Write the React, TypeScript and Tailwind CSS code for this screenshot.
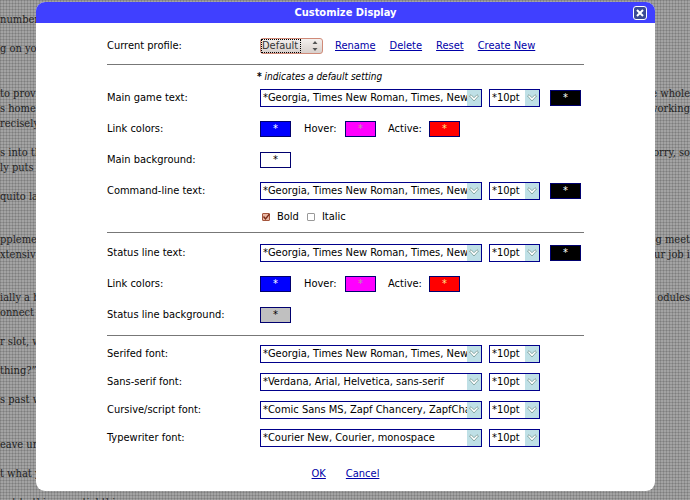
import { useId } from "react";

const GEORGIA = "*Georgia, Times New Roman, Times, New York, serif";

type StoryLine = { left?: string; right?: string };

const story: { gap: string; lines: StoryLine[] }[] = [
  { gap: "mt-3", lines: [{ left: "number" }] },
  { gap: "mt-3.5", lines: [{ left: "g on you" }] },
  {
    gap: "mt-[30px]",
    lines: [
      { left: "to provi", right: "e whole" },
      { left: "s home", right: "working" },
      { left: "recisely" },
    ],
  },
  { gap: "mt-3.5", lines: [{ left: "s into th", right: "orry, so" }, { left: "ly puts" }] },
  { gap: "mt-3.5", lines: [{ left: "quito la" }] },
  {
    gap: "mt-7",
    lines: [
      { left: "pplemen", right: "g meet" },
      { left: "xtensiv", right: "ur job i" },
    ],
  },
  { gap: "mt-7", lines: [{ left: "ially a b", right: "odules" }, { left: "onnect" }] },
  { gap: "mt-3.5", lines: [{ left: "r slot, w" }] },
  { gap: "mt-3.5", lines: [{ left: "thing?”" }] },
  { gap: "mt-3.5", lines: [{ left: "s past w" }] },
  { gap: "mt-[30px]", lines: [{ left: "eave un" }] },
  { gap: "mt-3.5", lines: [{ left: "t what y" }] },
  { gap: "mt-3.5", lines: [{ left: "got to this essential this" }] },
];

function StoryBackdrop() {
  return (
    <div
      aria-hidden="true"
      className="absolute inset-0 overflow-hidden bg-[#a3a3a3] bg-[linear-gradient(to_right,#00000020_1px,transparent_1px),linear-gradient(to_bottom,#00000020_1px,transparent_1px)] bg-[size:3px_3px] font-['DejaVu_Serif_Condensed','DejaVu_Serif',serif] text-[11px] leading-[15px] text-[#222]"
    >
      {story.map((p, i) => (
        <div key={i} className={p.gap}>
          {p.lines.map((line, j) => (
            <div key={j} className="flex h-[15px] justify-between whitespace-nowrap">
              <span>{line.left}</span>
              <span>{line.right}</span>
            </div>
          ))}
        </div>
      ))}
    </div>
  );
}

function Combo({ label, value, wide }: { label: string; value: string; wide?: boolean }) {
  return (
    <span
      className={`relative flex h-[18px] shrink-0 items-stretch border border-[#00008b] bg-white ${wide ? "w-[222px]" : "w-[51px]"}`}
    >
      <select
        aria-label={label}
        className={`h-full w-full appearance-none overflow-hidden bg-transparent pl-0.5 text-[11px] outline-none ${wide ? "pr-3.5" : "pr-3"}`}
      >
        <option>{value}</option>
      </select>
      <span className="pointer-events-none absolute inset-y-0 right-0 flex w-3.5 items-center justify-center bg-[#bfe0e6]">
        <svg viewBox="0 0 10 8" className="h-2 w-2.5" aria-hidden="true">
          <path d="M.5 2 2 .7 5 3.7 8 .7 9.5 2 5 7z" fill="#fff" stroke="#7d9f9a" strokeWidth=".9" />
        </svg>
      </span>
    </span>
  );
}

function Swatch({ label, className }: { label: string; className: string }) {
  return (
    <button
      type="button"
      aria-label={label}
      className={`h-4 w-[31px] shrink-0 border border-[#00006e] text-[11px] leading-[14px] ${className}`}
    >
      *
    </button>
  );
}

function Row({ label, children }: { label: string; children: React.ReactNode }) {
  return (
    <div className="flex h-[18px] items-center">
      <span className="w-[153px] shrink-0">{label}</span>
      {children}
    </div>
  );
}

function FontRow({ label, value = GEORGIA, swatch }: { label: string; value?: string; swatch?: boolean }) {
  return (
    <Row label={label}>
      <Combo wide label={label} value={value} />
      <span className="w-[7px]" />
      <Combo label={`${label} size`} value="*10pt" />
      {swatch && (
        <span className="ml-2.5 flex">
          <Swatch label={`${label} color`} className="bg-black text-white" />
        </span>
      )}
    </Row>
  );
}

function LinkColors() {
  return (
    <Row label="Link colors:">
      <Swatch label="Link color" className="bg-[#0000ff] text-white" />
      <span className="ml-[13px] w-[41px]">Hover:</span>
      <Swatch label="Hover color" className="bg-[#ff00ff] text-[#b0a0a0]" />
      <span className="ml-3 w-[41px]">Active:</span>
      <Swatch label="Active color" className="bg-[#ff0000] text-[#ffe08a]" />
    </Row>
  );
}

function TextLink({ children }: { children: string }) {
  return (
    <a href="#" className="text-[#0000a8] underline">
      {children}
    </a>
  );
}

function TickBox({ label, checked }: { label: string; checked?: boolean }) {
  const id = useId();
  return (
    <span className="flex items-center">
      <span className="relative flex">
        <input
          id={id}
          type="checkbox"
          defaultChecked={checked}
          className="peer size-2 appearance-none rounded-[1px] border border-[#999] bg-white checked:border-[#a4553c] checked:bg-[#e9b8a4]"
        />
        <svg viewBox="0 0 8 8" className="pointer-events-none absolute inset-0 hidden size-2 peer-checked:block" aria-hidden="true">
          <path d="M1.5 3.5 3.5 6 7.5 1" fill="none" stroke="#7a2c18" strokeWidth="1.4" />
        </svg>
      </span>
      <label htmlFor={id} className="ml-[7px]">
        {label}
      </label>
    </span>
  );
}

export default function App() {
  return (
    <div className="relative min-h-screen overflow-hidden font-['DejaVu_Sans_Condensed','DejaVu_Sans',sans-serif] text-[11px] leading-[14px] text-black">
      <StoryBackdrop />
      <main className="relative mr-[35px] ml-9 pt-0.5">
        <section role="dialog" aria-labelledby="title" className="overflow-hidden rounded-[9px] bg-white">
          <header className="flex h-[21px] items-center bg-[#4040ff] pr-2 pl-[22px] text-white">
            <h1 id="title" className="flex-1 text-center font-bold">
              Customize Display
            </h1>
            <button type="button" aria-label="Close" className="flex size-3.5 items-center justify-center rounded-[3px] border border-white bg-[#3a4a94]">
              <svg viewBox="0 0 8 8" className="size-2" aria-hidden="true">
                <path d="M1 1 7 7M7 1 1 7" stroke="#fff" strokeWidth="2" />
              </svg>
            </button>
          </header>

          <form className="mx-[71px] pb-2.5">
            <div className="flex h-[42px] items-center border-b border-[#777] pt-1">
              <label htmlFor="profile" className="w-[153px] shrink-0">
                Current profile:
              </label>
              <span className="relative flex h-4 w-[63px] shrink-0 items-center rounded-[3px] border border-[#d08a78] bg-linear-to-b from-[#f4f0ee] to-[#d8d0cc]">
                <select id="profile" className="h-3.5 w-10 appearance-none border border-dotted border-black text-[11px] leading-3 text-[#333] outline-none">
                  <option>Default</option>
                </select>
                <svg viewBox="0 0 6 12" className="pointer-events-none absolute right-1 h-3 w-1.5" aria-hidden="true">
                  <path d="M.5 4 3 1 5.5 4zM.5 8 3 11 5.5 8z" fill="#555" />
                </svg>
              </span>
              <span className="ml-3 flex gap-3.5 whitespace-nowrap">
                <TextLink>Rename</TextLink>
                <TextLink>Delete</TextLink>
                <TextLink>Reset</TextLink>
                <TextLink>Create New</TextLink>
              </span>
            </div>

            <p className="ml-[150px] pt-[5px] text-[10px] leading-[14px] italic">
              <b>*</b> indicates a default setting
            </p>

            <div className="mt-[5px] flex flex-col gap-[13px]">
              <FontRow label="Main game text:" swatch />
              <LinkColors />
              <Row label="Main background:">
                <Swatch label="Main background color" className="bg-white" />
              </Row>
              <FontRow label="Command-line text:" swatch />
            </div>
            <div className="mt-2.5 ml-[155px] flex gap-2">
              <TickBox label="Bold" checked />
              <TickBox label="Italic" />
            </div>

            <hr className="mt-2 border-[#777]" />
            <div className="mt-[11px] flex flex-col gap-[13px]">
              <FontRow label="Status line text:" swatch />
              <LinkColors />
              <Row label="Status line background:">
                <Swatch label="Status line background color" className="bg-[#c0c0c0]" />
              </Row>
            </div>

            <hr className="mt-[11px] border-[#777]" />
            <div className="mt-[9px] flex flex-col gap-2.5">
              <FontRow label="Serifed font:" />
              <FontRow label="Sans-serif font:" value="*Verdana, Arial, Helvetica, sans-serif" />
              <FontRow label="Cursive/script font:" value="*Comic Sans MS, Zapf Chancery, ZapfChancery, cursive" />
              <FontRow label="Typewriter font:" value="*Courier New, Courier, monospace" />
            </div>

            <div className="mt-5 flex justify-center gap-5">
              <TextLink>OK</TextLink>
              <TextLink>Cancel</TextLink>
            </div>
          </form>
        </section>
      </main>
    </div>
  );
}
